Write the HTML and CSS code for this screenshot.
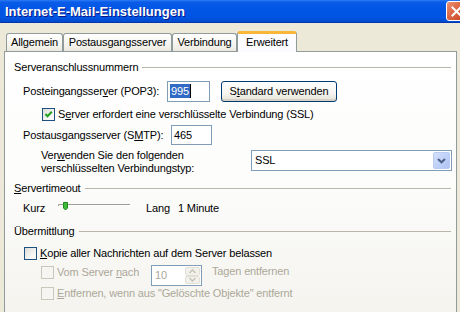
FILE: index.html
```html
<!DOCTYPE html>
<html lang="de">
<head>
<meta charset="utf-8">
<title>Internet-E-Mail-Einstellungen</title>
<link rel="stylesheet" href="styles.css">
</head>
<body>
<div class="titlebar">
  <span class="title">Internet-E-Mail-Einstellungen</span>
  <span class="close"><svg width="21" height="21" viewBox="0 0 21 21"><path d="M6 6 L15 15 M15 6 L6 15" stroke="#fff" stroke-width="2.2" stroke-linecap="square"/></svg></span>
</div>
<div class="tabs">
  <div class="tab t1">Allgemein</div>
  <div class="tab t2">Postausgangsserver</div>
  <div class="tab t3">Verbindung</div>
  <div class="tab sel">Erweitert</div>
</div>
<div class="panel">
  <div class="ghead"><span>Serveranschlussnummern</span><span class="gline"></span></div>

  <div class="row r-pop">
    <span class="lbl w144">Posteingangsser<u>v</u>er (POP3):</span>
    <span class="field f-pop"><span class="hl">995</span><span class="caret"></span></span>
    <span class="btn">S<u>t</u>andard verwenden</span>
  </div>

  <div class="row r-ssl">
    <span class="cb on"><svg width="13" height="13" viewBox="0 0 13 13"><path d="M3.5 6 L5.5 8.3 L9.8 3.8" fill="none" stroke="#21A121" stroke-width="2"/></svg></span>
    <span class="cbt">S<u>e</u>rver erfordert eine verschlüsselte Verbindung (SSL)</span>
  </div>

  <div class="row r-smtp">
    <span class="lbl w148">Postausgangsserver (S<u>M</u>TP):</span>
    <span class="field f-smtp">465</span>
  </div>

  <div class="row r-type">
    <span class="typetxt">Ver<u>w</u>enden Sie den folgenden<br>verschlüsselten Verbindungstyp:</span>
    <span class="select"><span class="seltxt">SSL</span><span class="selbtn"><svg width="17" height="17" viewBox="0 0 17 17"><path d="M5 7 L8.5 10.3 L12 7" fill="none" stroke="#4D6185" stroke-width="2"/></svg></span></span>
  </div>

  <div class="ghead g2"><span><u>S</u>ervertimeout</span><span class="gline"></span></div>

  <div class="row r-slider">
    <span class="lbl w35">Kurz</span>
    <span class="slider"><svg width="72" height="14" viewBox="0 0 72 14"><path d="M0.5 6 V4.5 H72" fill="none" stroke="#9D9C99"/><path d="M1.5 6 V5.5 H72" fill="none" stroke="#fff"/><path d="M5.5 2.5 H9.5 V8 L7.5 10 L5.5 8 Z" fill="#3DBB3D" stroke="#1E8A1E"/></svg></span>
    <span class="lbl w32">Lang</span>
    <span class="lbl">1 Minute</span>
  </div>

  <div class="ghead g3"><span>Übermittlung</span><span class="gline"></span></div>

  <div class="row r-copy">
    <span class="cb"></span>
    <span class="cbt"><u>K</u>opie aller Nachrichten auf dem Server belassen</span>
  </div>

  <div class="row r-vom">
    <span class="cbwrap">
      <span class="cb dis"></span>
      <span class="cbt gray">Vom Server <u>n</u>ach</span>
    </span>
    <span class="spin"><span class="spintxt">10</span><span class="spinbtns"><span class="sb"><svg width="13" height="9" viewBox="0 0 13 9"><path d="M3.5 6 L6.5 3 L9.5 6" fill="none" stroke="#C9C7BA" stroke-width="1.6"/></svg></span><span class="sb"><svg width="13" height="9" viewBox="0 0 13 9"><path d="M3.5 3 L6.5 6 L9.5 3" fill="none" stroke="#C9C7BA" stroke-width="1.6"/></svg></span></span></span>
    <span class="gray tagen">Tagen entfernen</span>
  </div>

  <div class="row r-ent">
    <span class="cb dis"></span>
    <span class="cbt gray"><u>E</u>ntfernen, wenn aus "Gelöschte Objekte" entfernt</span>
  </div>
</div>
</body>
</html>
```

FILE: styles.css
```css
html, body {
  margin: 0;
  padding: 0;
}
body {
  width: 460px;
  height: 312px;
  overflow: hidden;
  background: #ECE9D8;
  font-family: "Liberation Sans", Arial, sans-serif;
  font-size: 11px;
  line-height: 13px;
  letter-spacing: -0.15px;
  color: #000;
}
u { text-decoration: underline; text-underline-offset: 1px; }

.titlebar {
  height: 22px;
  display: flex;
  align-items: flex-start;
  justify-content: space-between;
  background: linear-gradient(#2C7BF5 0%, #0A5CE8 10%, #0055E5 45%, #0054E3 80%, #0049C9 100%);
  border-bottom: 1px solid #0336B0;
  overflow: hidden;
}
.title {
  margin: 4px 0 0 5px;
  font-weight: bold;
  font-size: 13px;
  line-height: 15px;
  letter-spacing: 0;
  color: #fff;
  text-shadow: 1px 1px 0 #0A1883;
}
.close {
  width: 21px;
  height: 20px;
  margin-top: 1px;
  margin-right: -7px;
  box-sizing: border-box;
  border: 1px solid #fff;
  border-radius: 3px;
  background: linear-gradient(135deg, #E99478 0%, #DD6A48 40%, #C8431F 100%);
  display: flex;
  align-items: center;
  justify-content: center;
}
.close svg { display: block; }

.tabs {
  position: relative;
  z-index: 1;
  display: flex;
  align-items: flex-end;
  height: 21px;
  margin-top: 8px;
  padding-left: 6px;
}
.tab {
  box-sizing: border-box;
  height: 18px;
  border: 1px solid #919B9C;
  border-bottom: none;
  border-radius: 3px 3px 0 0;
  background: linear-gradient(#FFFFFF, #F3F2EC 70%, #EAE8DF);
  text-align: center;
  line-height: 17px;
  margin-bottom: 1px;
}
.t1 { width: 57px; }
.t2 { width: 109px; }
.t3 { width: 65px; }
.sel {
  width: 60px;
  height: 21px;
  margin-bottom: 0;
  background: #FCFCFE;
  border-top: 3px solid #FFC73C;
  border-color: #E68B2C #919B9C #919B9C;
  border-top-color: #F9B639;
  line-height: 16px;
}

.panel {
  margin: -1px 3px 0 4px;
  height: 270px;
  box-sizing: border-box;
  border: 1px solid #919B9C;
  background: linear-gradient(#FFFFFF 0%, #FCFCFB 50%, #F4F3EE 100%);
  padding-top: 8px;
}

.ghead {
  display: flex;
  align-items: center;
  height: 14px;
  margin: 0 5px 0 9px;
}
.gline {
  flex: 1;
  height: 0;
  border-top: 1px solid #BAB7A9;
  margin-left: 4px;
}
.g2 { margin-top: 6px; }
.g3 { margin-top: 8px; }

.row {
  display: flex;
  align-items: center;
}
.lbl { white-space: nowrap; }
.w144 { width: 144px; }
.w148 { width: 148px; }
.w35 { width: 35px; }
.w32 { width: 32px; }

.r-pop { height: 22px; margin-top: 6px; padding-left: 18px; }
.field {
  box-sizing: border-box;
  height: 21px;
  border: 1px solid #7F9DB9;
  background: #fff;
  display: flex;
  align-items: center;
  padding-left: 2px;
}
.f-pop { width: 43px; }
.f-smtp { width: 41px; height: 20px; }
.hl {
  background: #316AC5;
  color: #fff;
  padding: 1px 1px 0;
}
.caret {
  width: 1px;
  height: 14px;
  background: #000;
}
.btn {
  box-sizing: border-box;
  width: 116px;
  height: 21px;
  margin-left: 11px;
  border: 1px solid #003C74;
  border-radius: 3px;
  background: linear-gradient(#FFFFFF 0%, #F5F4EF 60%, #E3E1D6 100%);
  box-shadow: inset 0 -2px 0 #D6D0C5;
  text-align: center;
  line-height: 19px;
}

.r-ssl { height: 16px; margin-top: 4px; padding-left: 37px; }
.cb {
  box-sizing: border-box;
  width: 13px;
  height: 13px;
  border: 1px solid #1C5180;
  background: linear-gradient(135deg, #DCDCD7 0%, #F4F4F2 60%, #FFFFFF 100%);
  display: flex;
  align-items: center;
  justify-content: center;
  flex: none;
}
.cb svg { display: block; margin: -1px; }
.cbt { margin-left: 3px; white-space: nowrap; }
.cb.dis {
  border-color: #CAC8BB;
  background: #F6F5F1;
}
.gray { color: #ACA899; }

.r-smtp { height: 22px; margin-top: 2px; padding-left: 18px; }

.r-type { height: 27px; margin-top: 2px; align-items: flex-start; padding-left: 36px; }
.typetxt { width: 210px; padding-top: 1px; white-space: nowrap; }
.select {
  box-sizing: border-box;
  width: 201px;
  height: 21px;
  margin-top: 2px;
  border: 1px solid #7F9DB9;
  background: #fff;
  display: flex;
  align-items: center;
  justify-content: space-between;
  padding: 0 1px 0 3px;
}
.selbtn {
  box-sizing: border-box;
  width: 17px;
  height: 17px;
  border: 1px solid #B9CBF3;
  border-radius: 2px;
  background: linear-gradient(135deg, #D4E0FB 0%, #BDCFF8 60%, #AFC4F4 100%);
  display: flex;
  align-items: center;
  justify-content: center;
}
.selbtn svg { display: block; margin: -1px; }

.r-slider { height: 16px; margin-top: 5px; padding-left: 18px; }
.slider { width: 72px; margin-right: 16px; display: flex; }
.slider svg { display: block; margin-top: -2px; }

.r-copy { height: 16px; margin-top: 7px; padding-left: 19px; }

.r-vom { height: 21px; margin-top: 4px; padding-left: 36px; align-items: flex-start; }
.cbwrap { width: 110px; display: flex; align-items: center; margin-top: 1px; }
.spin {
  box-sizing: border-box;
  width: 51px;
  height: 21px;
  border: 1px solid #7F9DB9;
  background: #fff;
  display: flex;
  align-items: stretch;
  justify-content: space-between;
}
.spintxt { color: #ACA899; padding-left: 3px; line-height: 19px; }
.spinbtns {
  width: 15px;
  display: flex;
  flex-direction: column;
  padding: 1px 1px 1px 0;
}
.sb {
  flex: 1;
  border: 1px solid #E2E0D6;
  border-radius: 2px;
  background: #F2F1EB;
  display: flex;
  align-items: center;
  justify-content: center;
  overflow: hidden;
}
.sb svg { display: block; }
.tagen { margin-left: 10px; margin-top: 0; }

.r-ent { height: 13px; margin-top: 1px; padding-left: 36px; }
```
